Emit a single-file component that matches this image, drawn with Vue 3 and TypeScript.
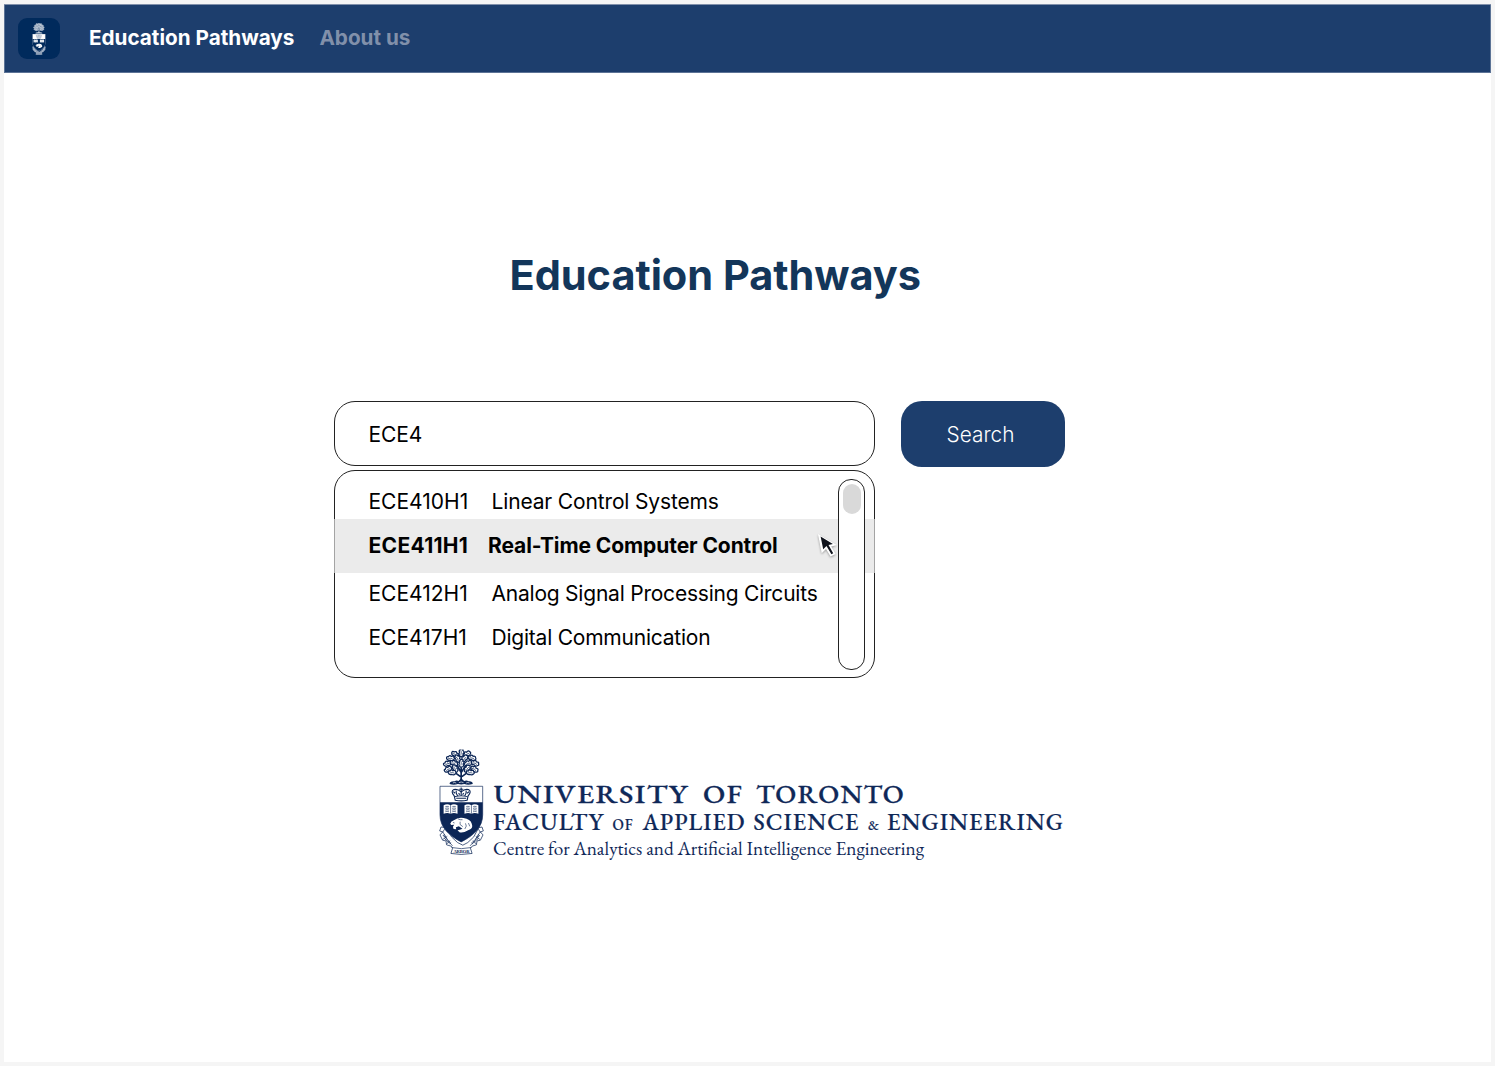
<script setup lang="ts">
import { ref } from 'vue'

interface Course {
  code: string
  title: string
}

const query = ref('ECE4')
const active = ref('ECE411H1')

const courses: Course[] = [
  { code: 'ECE410H1', title: 'Linear Control Systems' },
  { code: 'ECE411H1', title: 'Real-Time Computer Control' },
  { code: 'ECE412H1', title: 'Analog Signal Processing Circuits' },
  { code: 'ECE417H1', title: 'Digital Communication' },
]

// Leaf clusters of the oak: centre x, centre y, rotation
const leaves: [number, number, number][] = [
  [95, 38, 90], [77, 43, 30], [113, 42, -30], [63, 55, 0], [84, 56, 60], [106, 55, -50], [128, 54, 10],
  [54, 71, -20], [73, 70, 20], [95, 70, 90], [117, 70, -20], [137, 70, 20],
  [56, 88, -30], [76, 86, 60], [114, 86, -60], [135, 88, 30], [68, 98, 0], [123, 98, 0],
]
</script>

<template>
  <svg class="defs" aria-hidden="true">
    <symbol id="crest" viewBox="28 28 136 320">
      <path class="line trunk" d="M95 126V82M93 110L66 90M97 110l27-20M94 96L80 70M96 96l16-26" />
      <g v-for="([x, y, r], i) in leaves" :key="i" :transform="`translate(${x} ${y}) rotate(${r})`">
        <path class="leaf" d="M-12 0q-1-7 5-5q5-7 9-1q8-3 8 3q4 4-1 7q-5 5-10 1q-8 3-11-5z" />
        <path class="vein" d="M-8 1Q0-2 6 1" />
      </g>
      <path class="solid" d="M60 132q0-9 15-8q6-5 12-1l8-8 9 8q8-4 13 1q13-1 13 8q-15 4-25 0q-10 3-20 0q-12 4-25 0z" />
      <path class="glint" d="M70 129q5-3 10 0M110 129q5-3 10 0M88 128q7-4 14 0" />
      <!-- motto ribbon -->
      <path class="ribbon" d="M34 262l-4 12 9 3-8 9 8 16 10 2 2 12 14 4 4 6-5 16q30 6 64 0l-5-16 5-6 13-4 2-12 10-2 8-16-8-9 9-3-4-12-10 2-15 28-18 17-15 8-16-8-18-17-15-28z" />
      <path class="line" d="M39 276l16 27 14 16M153 276l-17 27-14 16M66 324q29 7 60 0M39 300l14-10M152 300l-13-10M47 265l-8 13M145 265l8 13M51 314l10-11M141 314l-10-11" />
      <path class="letters" d="M42 286l9 15 13 12M149 286l-9 15-13 12" />
      <!-- shield -->
      <path class="chief" d="M31 139H160V225C160 263 133 288 95 307C58 288 31 263 31 225z" />
      <path class="field" d="M31 187H160V225C160 263 133 288 95 307C58 288 31 263 31 225z" />
      <g class="crown">
        <path d="M77 181l-3-13q-12-14-1-19 11-3 22 7 11-10 22-7 11 5-1 19l-3 13q-18 4-36 0z" />
        <path d="M76 170q19-5 38 0M84 168q-6-9-4-16M106 168q6-9 4-16M95 167v-24M89 148h12M80 175h30" />
        <path d="M71 155l6 5M119 155l-6 5M87 160l4 4M103 160l-4 4" />
      </g>
      <g v-for="x in [63, 126]" :key="x" :transform="`translate(${x} 208)`">
        <path class="charge" d="M-21-12q11-6 21 0q10-6 21 0v26q-11-5-21 0q-10-5-21 0z" />
        <path class="page" d="M0-12V14M-16-7q5-3 11 0M-16-2q5-3 11 0M-16 3q5-3 11 0M-16 8q5-3 11 0M5-7q5-3 11 0M5-2q5-3 11 0M5 3q5-3 11 0M5 8q5-3 11 0" />
      </g>
      <path class="charge" d="M62 252q2-8 11-10q12-10 29-7q21 3 25 17q4 11-3 16l-8 4q-15 9-26 6l-6-6 7-2 8-3q-8-4-11-7l-9 3 1 6-8-1-2-7 4-6-9 1z" />
      <path class="page" d="M70 248l5 2M92 246q-5 9 8 15M108 251q6 8-2 17M86 238q6 3 13 2M117 250l4 10" />
    </symbol>
  </svg>

  <div class="page-frame">
    <header class="bar">
      <span class="badge"><svg class="crest reversed"><use href="#crest" /></svg></span>
      <nav>
        <a class="brand">Education Pathways</a>
        <a class="about">About us</a>
      </nav>
    </header>

    <main>
      <h1>Education Pathways</h1>

      <section class="finder">
        <div class="column">
          <div class="field-box">{{ query }}</div>
          <div class="results">
            <ul>
              <li v-for="c in courses" :key="c.code" :class="{ active: c.code === active }">
                <span class="code">{{ c.code }}</span><span class="title">{{ c.title }}</span>
              </li>
            </ul>
            <div class="track"><div class="thumb"></div></div>
            <svg class="cursor" viewBox="0 0 24 28">
              <path d="M2 2l3.7 19.2 4.3-4.1 4.6 7.4 5-2.6-4.4-7.5 5.6-1.5z" fill="#fff" />
              <path d="M4.6 4.5l2.6 12.8 3.3-3.2 4.9 8.2 1.8-1-4.7-8.2 4.4-1.1z" fill="#10131c" />
            </svg>
          </div>
        </div>
        <button type="button">Search</button>
      </section>

      <footer class="wordmark">
        <svg class="crest large" viewBox="28 28 136 320">
          <use href="#crest" x="28" y="28" width="136" height="320" />
          <text class="motto" x="96" y="341" text-anchor="middle" textLength="49">ARBOR</text>
        </svg>
        <svg class="words" viewBox="0 0 580 100">
          <g class="bold">
            <text x="3.5" y="33" font-size="27" textLength="195" lengthAdjust="spacingAndGlyphs">UNIVERSITY</text>
            <text x="213" y="33" font-size="27" textLength="40" lengthAdjust="spacingAndGlyphs">OF</text>
            <text x="266" y="33" font-size="27" textLength="149" lengthAdjust="spacingAndGlyphs">TORONTO</text>
          </g>
          <g class="medium">
            <text x="3" y="59.5" font-size="22.5" textLength="111" lengthAdjust="spacingAndGlyphs">FACULTY</text>
            <text x="122.5" y="59.5" font-size="15.5" textLength="21" lengthAdjust="spacingAndGlyphs">OF</text>
            <text x="152.5" y="59.5" font-size="22.5" textLength="103" lengthAdjust="spacingAndGlyphs">APPLIED</text>
            <text x="263.5" y="59.5" font-size="22.5" textLength="106" lengthAdjust="spacingAndGlyphs">SCIENCE</text>
            <text x="378" y="59.5" font-size="14" textLength="10">&amp;</text>
            <text x="397" y="59.5" font-size="22.5" textLength="177" lengthAdjust="spacingAndGlyphs">ENGINEERING</text>
          </g>
          <text x="3" y="85" font-size="19.5" textLength="431" lengthAdjust="spacingAndGlyphs">Centre for Analytics and Artificial Intelligence Engineering</text>
        </svg>
      </footer>
    </main>
  </div>
</template>

<style>
body {
  margin: 0;
  background: #f5f5f5;
}
#app {
  padding-top: 4px;
}
</style>

<style scoped>
.defs {
  position: absolute;
  width: 0;
  height: 0;
}
.page-frame {
  box-sizing: border-box;
  width: 1487px;
  height: 1058px;
  margin: 0 4px;
  background: #fff;
  font-family: Inter, sans-serif;
  color: #000;
  border-top: 1px solid #8190aa;
}
.bar {
  box-sizing: border-box;
  height: 68px;
  background: #1d3e6d;
  border: solid #5c7396;
  border-width: 0 1px 1px;
  display: flex;
  align-items: center;
  padding-left: 13px;
}
.badge {
  width: 42px;
  height: 41px;
  border-radius: 9px;
  background: #002a5c;
  display: flex;
  align-items: center;
  justify-content: center;
}
nav {
  margin: 0 0 2px 29px;
  font-size: 20.7px;
  font-weight: 700;
  line-height: 26px;
  display: flex;
  gap: 25px;
  white-space: nowrap;
}
.brand {
  color: #fff;
}
.about {
  color: #8190aa;
}
.crest {
  --ink: #0c2656;
  --paper: #fff;
  --field: #0c2656;
  --mark: #0c2656;
  display: block;
  flex: none;
}
.reversed {
  --ink: #e8edf3;
  --paper: #8598b1;
  --field: #002a5c;
  --mark: #6b83a2;
  width: 14px;
  height: 32px;
}
.large {
  width: 45px;
  height: 107px;
}
.solid {
  fill: var(--ink);
}
.line {
  fill: none;
  stroke: var(--ink);
  stroke-width: 2;
}
.trunk {
  stroke-width: 5;
}
.leaf {
  fill: var(--paper);
  stroke: var(--ink);
  stroke-width: 3.8;
}
.vein {
  fill: none;
  stroke: var(--ink);
  stroke-width: 2;
}
.glint {
  fill: none;
  stroke: var(--paper);
  stroke-width: 2;
}
.ribbon {
  fill: var(--paper);
  stroke: var(--ink);
  stroke-width: 2.2;
}
.letters {
  fill: none;
  stroke: var(--ink);
  stroke-width: 7;
  stroke-dasharray: 2 2.5;
}
.chief {
  fill: #fff;
  stroke: var(--field);
  stroke-width: 2;
}
.field {
  fill: var(--field);
}
.crown {
  fill: none;
  stroke: var(--mark);
  stroke-width: 3.4;
}
.charge {
  fill: #fff;
}
.page {
  fill: none;
  stroke: var(--mark);
  stroke-width: 1.8;
}
.motto {
  font: 700 14px "Liberation Serif", serif;
  fill: var(--ink);
}
h1 {
  margin: 177px 0 0 505.5px;
  font-size: 41.5px;
  line-height: 50px;
  font-weight: 700;
  letter-spacing: -0.03px;
  color: #13365a;
  white-space: nowrap;
}
.finder {
  display: flex;
  align-items: flex-start;
  gap: 26px;
  margin: 101px 0 0 330px;
}
.column {
  width: 541px;
  display: flex;
  flex-direction: column;
  gap: 4px;
  font-size: 21px;
}
.field-box {
  box-sizing: border-box;
  height: 65px;
  border: 1.3px solid #222;
  border-radius: 21px;
  padding: 0 33.5px;
  line-height: 65px;
  letter-spacing: -0.1px;
}
.results {
  box-sizing: border-box;
  position: relative;
  height: 208px;
  border: 1.3px solid #222;
  border-radius: 21px;
}
ul {
  list-style: none;
  margin: 0 -1px;
  padding: 15px 0 0;
}
li {
  box-sizing: border-box;
  height: 44px;
  line-height: 32px;
  padding-left: 34.5px;
  display: flex;
  white-space: nowrap;
}
li:first-child {
  height: 33px;
}
li.active {
  height: 54px;
  line-height: 54px;
  font-weight: 700;
  background: rgba(225, 225, 225, 0.68);
}
li.active + li {
  padding-top: 5px;
  height: 49px;
}
.code {
  width: 123px;
}
.title {
  letter-spacing: -0.22px;
}
li:first-child .title {
  letter-spacing: -0.15px;
}
.active .code {
  width: 119.5px;
  letter-spacing: 0.3px;
}
.active .title {
  letter-spacing: -0.09px;
}
.track {
  position: absolute;
  box-sizing: border-box;
  top: 8px;
  right: 9px;
  width: 27px;
  height: 191px;
  padding: 4px;
  border: 1.3px solid #222;
  border-radius: 13px;
  background: #fff;
}
.thumb {
  width: 18px;
  height: 30px;
  border-radius: 9px;
  background: #d9d9d9;
}
.cursor {
  position: absolute;
  left: 481px;
  top: 61px;
  width: 24px;
  height: 28px;
  filter: drop-shadow(0 1px 1px rgba(0, 0, 0, 0.35));
}
button {
  width: 164px;
  height: 66px;
  border: 0;
  padding: 0 5px 0 0;
  border-radius: 21px;
  background: #1d3e6d;
  color: #fff;
  font: 300 20.8px Inter, sans-serif;
}
.wordmark {
  display: flex;
  margin: 71px 0 0 435px;
}
.words {
  width: 580px;
  height: 100px;
  margin: 21px 0 0 6px;
  fill: #0f2858;
  font-family: "EB Garamond", "Liberation Serif", serif;
}
.bold {
  font-weight: 500;
  letter-spacing: 1.2px;
  stroke: #0f2858;
  stroke-width: 0.3;
}
.medium {
  font-weight: 500;
  letter-spacing: 1px;
  stroke: #0f2858;
  stroke-width: 0.2;
}
</style>
